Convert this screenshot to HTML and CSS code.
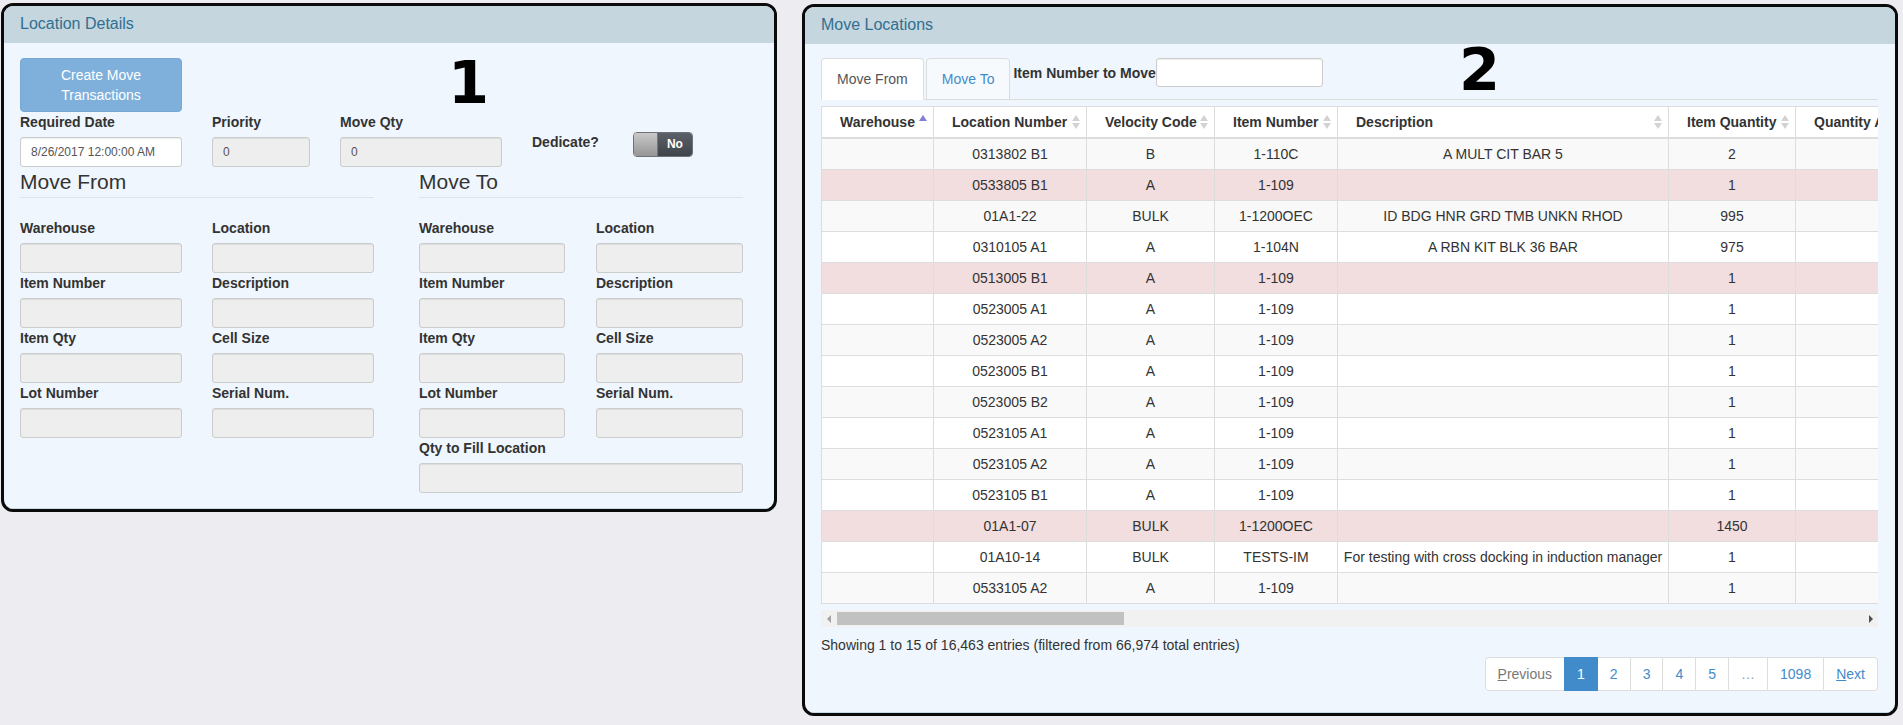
FILE: index.html
```html
<!DOCTYPE html>
<html>
<head>
<meta charset="utf-8">
<title>Move Locations</title>
<link rel="stylesheet" href="styles.css">
</head>
<body>
<div class="page">
  <section class="panel panel-left">
    <div class="panel-heading">Location Details</div>
    <div class="panel-body">
      <button class="btn-create" type="button">Create Move<br>Transactions</button>
      <div class="top-fields">
        <div class="field f-date"><label class="lbl">Required Date</label><input class="input white" type="text" value="8/26/2017 12:00:00 AM" readonly></div>
        <div class="field f-prio"><label class="lbl">Priority</label><input class="input" type="text" value="0" readonly></div>
        <div class="field f-qty"><label class="lbl">Move Qty</label><input class="input" type="text" value="0" readonly></div>
        <div class="field f-dedicate">
          <label class="lbl">Dedicate?</label>
          <div class="switch"><span class="switch-handle"></span><span class="switch-off">No</span></div>
        </div>
      </div>
      <div class="sides">
        <div class="side side-from">
          <div class="legend">Move From</div>
          <div class="grid">
            <div class="field"><label class="lbl">Warehouse</label><input class="input" type="text" readonly></div>
            <div class="field"><label class="lbl">Location</label><input class="input" type="text" readonly></div>
            <div class="field"><label class="lbl">Item Number</label><input class="input" type="text" readonly></div>
            <div class="field"><label class="lbl">Description</label><input class="input" type="text" readonly></div>
            <div class="field"><label class="lbl">Item Qty</label><input class="input" type="text" readonly></div>
            <div class="field"><label class="lbl">Cell Size</label><input class="input" type="text" readonly></div>
            <div class="field"><label class="lbl">Lot Number</label><input class="input" type="text" readonly></div>
            <div class="field"><label class="lbl">Serial Num.</label><input class="input" type="text" readonly></div>
          </div>
        </div>
        <div class="side side-to">
          <div class="legend">Move To</div>
          <div class="grid">
            <div class="field"><label class="lbl">Warehouse</label><input class="input" type="text" readonly></div>
            <div class="field"><label class="lbl">Location</label><input class="input" type="text" readonly></div>
            <div class="field"><label class="lbl">Item Number</label><input class="input" type="text" readonly></div>
            <div class="field"><label class="lbl">Description</label><input class="input" type="text" readonly></div>
            <div class="field"><label class="lbl">Item Qty</label><input class="input" type="text" readonly></div>
            <div class="field"><label class="lbl">Cell Size</label><input class="input" type="text" readonly></div>
            <div class="field"><label class="lbl">Lot Number</label><input class="input" type="text" readonly></div>
            <div class="field"><label class="lbl">Serial Num.</label><input class="input" type="text" readonly></div>
            <div class="field span2"><label class="lbl">Qty to Fill Location</label><input class="input" type="text" readonly></div>
          </div>
        </div>
      </div>
    </div>
    <div class="annot annot-1">1</div>
  </section>

  <section class="panel panel-right">
    <div class="panel-heading">Move Locations</div>
    <div class="panel-body body-right">
      <div class="tabs">
        <div class="tab active">Move From</div>
        <div class="tab">Move To</div>
        <label class="lbl tab-lbl">Item Number to Move</label>
        <input class="input white item-input" type="text" readonly>
      </div>
      <div class="table-scroll">
        <table class="grid-table">
          <colgroup>
            <col class="c1"><col class="c2"><col class="c3"><col class="c4"><col class="c5"><col class="c6"><col class="c7">
          </colgroup>
          <thead>
            <tr>
              <th><div class="th-in"><span>Warehouse</span><svg class="sort" width="8" height="16" viewBox="0 0 8 16"><path d="M4 1L8 7H0Z" fill="#7f80d6"/></svg></div></th>
              <th><div class="th-in"><span>Location Number</span><svg class="sort" width="8" height="16" viewBox="0 0 8 16"><path d="M4 1L8 7H0Z" fill="#d3d3d3"/><path d="M4 15L0 9H8Z" fill="#d3d3d3"/></svg></div></th>
              <th><div class="th-in"><span>Velocity Code</span><svg class="sort" width="8" height="16" viewBox="0 0 8 16"><path d="M4 1L8 7H0Z" fill="#d3d3d3"/><path d="M4 15L0 9H8Z" fill="#d3d3d3"/></svg></div></th>
              <th><div class="th-in"><span>Item Number</span><svg class="sort" width="8" height="16" viewBox="0 0 8 16"><path d="M4 1L8 7H0Z" fill="#d3d3d3"/><path d="M4 15L0 9H8Z" fill="#d3d3d3"/></svg></div></th>
              <th><div class="th-in"><span>Description</span><svg class="sort" width="8" height="16" viewBox="0 0 8 16"><path d="M4 1L8 7H0Z" fill="#d3d3d3"/><path d="M4 15L0 9H8Z" fill="#d3d3d3"/></svg></div></th>
              <th><div class="th-in"><span>Item Quantity</span><svg class="sort" width="8" height="16" viewBox="0 0 8 16"><path d="M4 1L8 7H0Z" fill="#d3d3d3"/><path d="M4 15L0 9H8Z" fill="#d3d3d3"/></svg></div></th>
              <th><div class="th-in"><span>Quantity Allocated</span><svg class="sort" width="8" height="16" viewBox="0 0 8 16"><path d="M4 1L8 7H0Z" fill="#d3d3d3"/><path d="M4 15L0 9H8Z" fill="#d3d3d3"/></svg></div></th>
            </tr>
          </thead>
          <tbody>
            <tr class="odd"><td></td><td>0313802 B1</td><td>B</td><td>1-110C</td><td>A MULT CIT BAR 5</td><td class="q">2</td><td></td></tr>
            <tr class="danger"><td></td><td>0533805 B1</td><td>A</td><td>1-109</td><td></td><td class="q">1</td><td></td></tr>
            <tr class="odd"><td></td><td>01A1-22</td><td>BULK</td><td>1-1200OEC</td><td>ID BDG HNR GRD TMB UNKN RHOD</td><td class="q">995</td><td></td></tr>
            <tr><td></td><td>0310105 A1</td><td>A</td><td>1-104N</td><td>A RBN KIT BLK 36 BAR</td><td class="q">975</td><td></td></tr>
            <tr class="danger"><td></td><td>0513005 B1</td><td>A</td><td>1-109</td><td></td><td class="q">1</td><td></td></tr>
            <tr><td></td><td>0523005 A1</td><td>A</td><td>1-109</td><td></td><td class="q">1</td><td></td></tr>
            <tr class="odd"><td></td><td>0523005 A2</td><td>A</td><td>1-109</td><td></td><td class="q">1</td><td></td></tr>
            <tr><td></td><td>0523005 B1</td><td>A</td><td>1-109</td><td></td><td class="q">1</td><td></td></tr>
            <tr class="odd"><td></td><td>0523005 B2</td><td>A</td><td>1-109</td><td></td><td class="q">1</td><td></td></tr>
            <tr><td></td><td>0523105 A1</td><td>A</td><td>1-109</td><td></td><td class="q">1</td><td></td></tr>
            <tr class="odd"><td></td><td>0523105 A2</td><td>A</td><td>1-109</td><td></td><td class="q">1</td><td></td></tr>
            <tr><td></td><td>0523105 B1</td><td>A</td><td>1-109</td><td></td><td class="q">1</td><td></td></tr>
            <tr class="danger"><td></td><td>01A1-07</td><td>BULK</td><td>1-1200OEC</td><td></td><td class="q">1450</td><td></td></tr>
            <tr><td></td><td>01A10-14</td><td>BULK</td><td>TESTS-IM</td><td>For testing with cross docking in induction manager</td><td class="q">1</td><td></td></tr>
            <tr class="odd"><td></td><td>0533105 A2</td><td>A</td><td>1-109</td><td></td><td class="q">1</td><td></td></tr>
          </tbody>
        </table>
      </div>
      <div class="hscroll">
        <span class="sb-arrow"><svg width="5" height="8" viewBox="0 0 5 8"><path d="M4 0V8L0 4Z" fill="#a3a3a3"/></svg></span>
        <span class="sb-thumb"></span>
        <span class="sb-fill"></span>
        <span class="sb-arrow"><svg width="5" height="8" viewBox="0 0 5 8"><path d="M1 0V8L5 4Z" fill="#505050"/></svg></span>
      </div>
      <div class="info">Showing 1 to 15 of 16,463 entries (filtered from 66,974 total entries)</div>
      <div class="pager">
        <ul class="pagination">
          <li class="disabled"><a><u>P</u>revious</a></li>
          <li class="active"><a>1</a></li>
          <li><a>2</a></li>
          <li><a>3</a></li>
          <li><a>4</a></li>
          <li><a>5</a></li>
          <li class="ellipsis"><a>…</a></li>
          <li><a>1098</a></li>
          <li><a><u>N</u>ext</a></li>
        </ul>
      </div>
    </div>
    <div class="annot annot-2">2</div>
  </section>
</div>
</body>
</html>
```

FILE: styles.css
```css
* { box-sizing: border-box; }

body {
  margin: 0;
  background: #edecf1;
  font-family: "Liberation Sans", Arial, sans-serif;
  font-size: 14px;
  line-height: 20px;
  color: #333;
}

.page {
  display: flex;
  align-items: flex-start;
  padding: 3px 0 0 1px;
}

.panel {
  position: relative;
  border: 3px solid #0b0b0b;
  border-radius: 12px;
  overflow: hidden;
  background: #eff6fd;
}

.panel-left { width: 776px; }
.panel-right { width: 1096px; margin-left: 25px; margin-top: 1px; }

.panel-heading {
  height: 37px;
  line-height: 36px;
  padding: 0 16px;
  background: #c5d6df;
  color: #31708f;
  font-size: 16px;
}

.panel-body {
  padding: 15px 16px;
  border-bottom: 1px solid #c6dbe7;
}

.body-right { padding: 14px 17px 21px 16px; }

/* left panel */
.btn-create {
  display: block;
  width: 162px;
  height: 54px;
  padding: 6px 12px;
  border: 1px solid #74a8d6;
  border-radius: 4px;
  background: #7fb0dc;
  color: #fff;
  font-family: "Liberation Sans", Arial, sans-serif;
  font-size: 14px;
  line-height: 20px;
  text-align: center;
}

.top-fields {
  display: flex;
  align-items: flex-start;
  gap: 30px;
}

.field { display: flex; flex-direction: column; }
.f-date { width: 162px; }
.f-prio { width: 98px; }
.f-qty { width: 162px; }
.f-dedicate {
  flex-direction: row;
  align-items: flex-start;
  margin-top: 20px;
  gap: 34px;
}

.lbl {
  display: block;
  font-weight: bold;
  line-height: 20px;
  margin-bottom: 5px;
  white-space: nowrap;
}
.f-dedicate .lbl { margin: 0; }

.input {
  display: block;
  width: 100%;
  height: 30px;
  padding: 5px 10px;
  border: 1px solid #ccc;
  border-radius: 3px;
  background: #eee;
  color: #555;
  font-family: "Liberation Sans", Arial, sans-serif;
  font-size: 12px;
  box-shadow: inset 0 1px 1px rgba(0,0,0,.075);
  outline: none;
}
.input.white { background: #fff; }

.switch {
  display: flex;
  width: 60px;
  height: 25px;
  border: 1px solid #6d7278;
  border-radius: 4px;
  overflow: hidden;
}
.switch-handle {
  width: 24px;
  background: linear-gradient(#c9c9c9, #959595);
  border-right: 1px solid #777;
}
.switch-off {
  flex: 1;
  background: linear-gradient(#5b6068, #40454c);
  color: #fff;
  font-size: 12px;
  font-weight: bold;
  line-height: 23px;
  text-align: center;
}

.sides {
  display: flex;
  gap: 45px;
  margin-top: 3px;
}
.side-from { width: 354px; }
.side-to { width: 324px; }

.legend {
  font-size: 21px;
  line-height: 23px;
  padding-bottom: 4px;
  border-bottom: 1px solid #dfe3e7;
  margin-bottom: 20px;
  color: #333;
}

.side-from .grid { display: grid; grid-template-columns: 162px 162px; column-gap: 30px; }
.side-to .grid { display: grid; grid-template-columns: 146px 147px; column-gap: 31px; }
.span2 { grid-column: 1 / 3; }

.annot {
  position: absolute;
  font-family: "DejaVu Sans", sans-serif;
  font-weight: bold;
  font-size: 59px;
  line-height: 59px;
  color: #000;
}
.annot-1 { left: 444px; top: 47px; }
.annot-2 { left: 654px; top: 33px; }

/* right panel */
.tabs {
  display: flex;
  align-items: flex-start;
  border-bottom: 1px solid #ddd;
  height: 42px;
}
.tab {
  padding: 10px 15px;
  line-height: 20px;
  height: 42px;
  border: 1px solid #ddd;
  border-bottom: 1px solid #ddd;
  border-radius: 4px 4px 0 0;
  margin-right: 2px;
  background: #f6fafd;
  color: #428bca;
}
.tab.active {
  background: #fff;
  color: #555;
  border-bottom-color: #fff;
}
.tab-lbl { margin: 5px 0 0 1px; }
.item-input { width: 167px; height: 29px; }

.table-scroll {
  overflow: hidden;
  margin-top: 6px;
}
.grid-table {
  border-collapse: collapse;
  table-layout: fixed;
  width: 1174px;
  background: #fff;
}
.c1 { width: 112px; }
.c2 { width: 153px; }
.c3 { width: 128px; }
.c4 { width: 123px; }
.c5 { width: 331px; }
.c6 { width: 127px; }
.c7 { width: 200px; }

.grid-table th,
.grid-table td {
  border: 1px solid #ddd;
  line-height: 20px;
  white-space: nowrap;
  overflow: hidden;
}
.grid-table th {
  padding: 5px 6px 5px 18px;
  border-bottom: 2px solid #ddd;
  text-align: left;
  font-weight: bold;
}
.th-in {
  display: flex;
  justify-content: space-between;
  align-items: center;
}
.sort { flex: none; }
.grid-table td {
  padding: 5px;
  text-align: center;
}
.grid-table tr.odd td { background: #f9f9f9; }
.grid-table tr.danger td { background: #f2dede; }

.hscroll {
  display: flex;
  align-items: center;
  height: 17px;
  margin-top: 6px;
  background: #f1f1f1;
}
.sb-arrow {
  width: 16px;
  display: flex;
  justify-content: center;
}
.sb-thumb {
  width: 287px;
  height: 13px;
  background: #c1c1c1;
}
.sb-fill { flex: 1; }

.info { margin-top: 8px; line-height: 20px; }

.pager {
  display: flex;
  justify-content: flex-end;
  margin-top: 2px;
}
.pagination {
  display: flex;
  margin: 0;
  padding: 0;
  list-style: none;
}
.pagination a {
  display: block;
  padding: 6px 12px;
  line-height: 20px;
  border: 1px solid #ddd;
  margin-left: -1px;
  background: #fff;
  color: #428bca;
}
.pagination li:first-child a { margin-left: 0; border-radius: 4px 0 0 4px; }
.pagination li:last-child a { border-radius: 0 4px 4px 0; }
.pagination .disabled a { color: #777; }
.pagination .ellipsis a { color: #999; }
.pagination .active a { background: #428bca; border-color: #428bca; color: #fff; position: relative; }
```
